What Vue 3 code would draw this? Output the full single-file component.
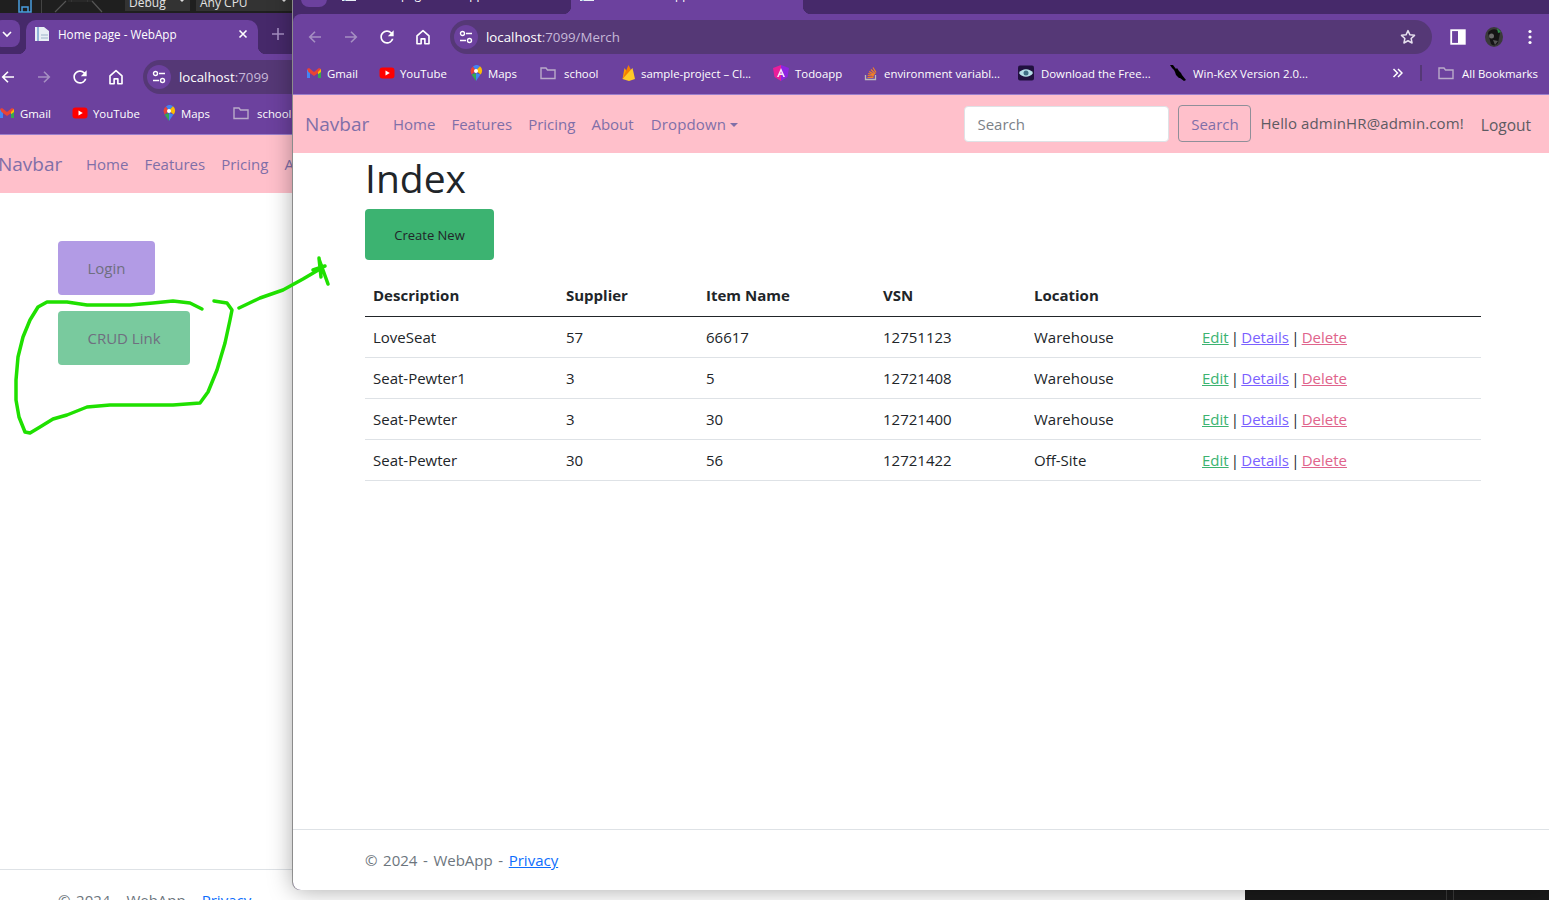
<script setup>
const bookmarks = [
  { name: 'Gmail', icon: 'gmail', w: 73, gap: 5 },
  { name: 'YouTube', icon: 'youtube', w: 89, gap: 5 },
  { name: 'Maps', icon: 'maps', w: 72, gap: 4 },
  { name: 'school', icon: 'folder', w: 81, gap: 8 },
  { name: 'sample-project – Cl...', icon: 'firebase', w: 152, gap: 4 },
  { name: 'Todoapp', icon: 'angular', w: 90, gap: 6 },
  { name: 'environment variabl...', icon: 'stack', w: 155, gap: 5 },
  { name: 'Download the Free...', icon: 'eye', w: 152, gap: 7 },
  { name: 'Win-KeX Version 2.0...', icon: 'kex', w: 190, gap: 7 },
]

const navLinks = ['Home', 'Features', 'Pricing', 'About']

const windows = [
  {
    id: 'back',
    host: 'localhost',
    path: ':7099',
    canGoBack: true,
    tabs: [{ title: 'Home page - WebApp', active: true }],
  },
  {
    id: 'front',
    host: 'localhost',
    path: ':7099/Merch',
    canGoBack: false,
    tabs: [
      { title: 'Home page - WebApp', active: false },
      { title: 'Index - WebApp', active: true },
    ],
  },
]

const merch = [
  { desc: 'LoveSeat', supplier: '57', item: '66617', vsn: '12751123', location: 'Warehouse' },
  { desc: 'Seat-Pewter1', supplier: '3', item: '5', vsn: '12721408', location: 'Warehouse' },
  { desc: 'Seat-Pewter', supplier: '3', item: '30', vsn: '12721400', location: 'Warehouse' },
  { desc: 'Seat-Pewter', supplier: '30', item: '56', vsn: '12721422', location: 'Off-Site' },
]
</script>

<template>
  <div class="desktop">
    <div class="ide-bar">
      <svg class="ide-save" width="14" height="13" viewBox="0 0 14 13">
        <path d="M1 -4h12v16H1z M4 7h6v5H4z" fill="none" stroke="#4a9fe0" stroke-width="1.5" />
      </svg>
      <i class="ide-sep"></i>
      <svg class="ide-arrows" width="60" height="13" viewBox="0 0 60 13">
        <path d="M1 12 12 1M18 1l-1 0M34 1l-1 0M38 1l10 11" fill="none" stroke="#555" stroke-width="1.2" />
        <path d="M14 1h24" fill="none" stroke="#333" stroke-width="1" />
      </svg>
      <div class="ide-select debug">Debug<span class="ide-caret"></span></div>
      <div class="ide-select cpu">Any CPU<span class="ide-caret"></span></div>
    </div>

    <section v-for="win in windows" :key="win.id" class="window" :class="win.id">
      <div class="tabstrip">
        <div class="tab-search">
          <svg width="12" height="12" viewBox="0 0 12 12">
            <path d="M2 4l4 4 4-4" fill="none" stroke="#fff" stroke-width="1.6" />
          </svg>
        </div>
        <div v-for="tab in win.tabs" :key="tab.title" class="tab" :class="{ active: tab.active }">
          <svg class="tab-icon" width="16" height="16" viewBox="0 0 16 16">
            <path d="M1 1h9l5 4v10H1z" fill="#e8eef5" />
            <path d="M4 1v14" stroke="#8fb4d8" stroke-width="2" />
            <path d="M7 9h7M7 12h7" stroke="#b5c6d8" stroke-width="1.5" />
          </svg>
          <span class="tab-title">{{ tab.title }}</span>
          <svg class="tab-close" width="10" height="10" viewBox="0 0 10 10">
            <path d="M1.5 1.5l7 7M8.5 1.5l-7 7" stroke="#fff" stroke-width="1.6" />
          </svg>
        </div>
        <svg v-if="win.id === 'back'" class="tab-new" width="14" height="14" viewBox="0 0 14 14">
          <path d="M7 1v12M1 7h12" stroke="#a58fc2" stroke-width="1.6" />
        </svg>
      </div>

      <div class="toolbar">
        <button class="tool" type="button" aria-label="Back">
          <svg width="18" height="18" viewBox="0 0 24 24">
            <path d="M20 12H5M12 5l-7 7 7 7" fill="none" :stroke="win.canGoBack ? '#fff' : '#a58fc2'" stroke-width="2.2" />
          </svg>
        </button>
        <button class="tool" type="button" aria-label="Forward">
          <svg width="18" height="18" viewBox="0 0 24 24">
            <path d="M4 12h15M12 5l7 7-7 7" fill="none" stroke="#a58fc2" stroke-width="2.2" />
          </svg>
        </button>
        <button class="tool" type="button" aria-label="Reload">
          <svg width="20" height="20" viewBox="0 0 24 24">
            <path d="M17.65 6.35A7.958 7.958 0 0 0 12 4c-4.42 0-7.99 3.58-7.99 8s3.57 8 7.99 8c3.73 0 6.84-2.55 7.73-6h-2.08A5.99 5.99 0 0 1 12 18c-3.31 0-6-2.69-6-6s2.69-6 6-6c1.66 0 3.14.69 4.22 1.78L13 11h7V4l-2.35 2.35z" fill="#fff" />
          </svg>
        </button>
        <button class="tool" type="button" aria-label="Home">
          <svg width="18" height="18" viewBox="0 0 24 24">
            <path d="M4 10.5 12 3.5l8 7V21h-5.5v-6.5h-5V21H4z" fill="none" stroke="#fff" stroke-width="2.2" stroke-linejoin="round" />
          </svg>
        </button>

        <div class="omnibox">
          <span class="site-info">
            <svg width="14" height="14" viewBox="0 0 14 14">
              <circle cx="3.5" cy="3.5" r="2" fill="none" stroke="#fff" stroke-width="1.4" />
              <path d="M7 3.5h6M1 10.5h6" stroke="#fff" stroke-width="1.6" />
              <circle cx="10.5" cy="10.5" r="2" fill="none" stroke="#fff" stroke-width="1.4" />
            </svg>
          </span>
          <span class="url"><b>{{ win.host }}</b>{{ win.path }}</span>
          <svg class="star" width="18" height="18" viewBox="0 0 24 24">
            <path d="M12 3.5l2.6 5.6 6.1.7-4.5 4.2 1.2 6L12 17l-5.4 3 1.2-6-4.5-4.2 6.1-.7z" fill="none" stroke="#e6e0ee" stroke-width="2" stroke-linejoin="round" />
          </svg>
        </div>

        <button class="tool" type="button" aria-label="Side panel">
          <svg width="16" height="16" viewBox="0 0 16 16">
            <rect x="1.2" y="1.2" width="13.6" height="13.6" fill="none" stroke="#fff" stroke-width="1.8" />
            <rect x="8" y="1" width="7" height="14" fill="#fff" />
          </svg>
        </button>
        <button class="tool" type="button" aria-label="Profile">
          <svg width="20" height="20" viewBox="0 0 20 20">
            <ellipse cx="10" cy="10" rx="9" ry="10" fill="#3a3a3a" />
            <path d="M4 6c3-5 9-5 12 0l-2 10c-2 3-5 3-7 1z" fill="#141414" />
            <path d="M13 1l4 4-3 1z" fill="#2e8b4a" />
            <circle cx="7.500" cy="9" r="2.500" fill="#6a6a6a" />
            <path d="M9 13l5 1-3 4z" fill="#555" />
          </svg>
        </button>
        <button class="tool" type="button" aria-label="Menu">
          <svg width="4" height="16" viewBox="0 0 4 16">
            <circle cx="2" cy="2.5" r="1.6" fill="#fff" />
            <circle cx="2" cy="8" r="1.6" fill="#fff" />
            <circle cx="2" cy="13.5" r="1.6" fill="#fff" />
          </svg>
        </button>
      </div>

      <div class="bookmarks">
        <a v-for="b in bookmarks" :key="b.name" class="bookmark" :style="{ width: b.w + 'px', gap: b.gap + 'px' }">
          <svg class="bm-icon" width="16" height="16" viewBox="0 0 16 16">
            <template v-if="b.icon === 'gmail'">
              <path d="M1 4v9h3V7z" fill="#4285f4" />
              <path d="M15 4v9h-3V7z" fill="#34a853" />
              <path d="M1 4 3 3l5 4 5-4 2 1-1.5 3L8 11 2.500 7z" fill="#ea4335" />
              <path d="M12 7l3-3v3l-3 2.300z" fill="#fbbc04" />
            </template>
            <template v-else-if="b.icon === 'youtube'">
              <rect x="0.500" y="2.500" width="15" height="11" rx="3" fill="#f00" />
              <path d="M6.500 5.500v5L10.800 8z" fill="#fff" />
            </template>
            <template v-else-if="b.icon === 'maps'">
              <path d="M8 16 3.500 9.500 8 8z" fill="#34a853" />
              <path d="M8 16l4.500-6.500L8 8z" fill="#4285f4" />
              <path d="M2.500 6A5.500 5.500 0 0 1 5 1.500l3 4L3.500 9.500z" fill="#ea4335" />
              <path d="M5 1.500a5.500 5.500 0 0 1 7-.2L8 5.500z" fill="#4285f4" />
              <path d="M12 1.300a5.500 5.500 0 0 1 .500 8.200L8 5.500z" fill="#fbbc04" />
              <circle cx="8" cy="6" r="2" fill="#fff" />
            </template>
            <template v-else-if="b.icon === 'folder'">
              <path d="M1 3h5l1.500 2H15v8.500H1z" fill="none" stroke="#b9aac9" stroke-width="1.400" />
            </template>
            <template v-else-if="b.icon === 'firebase'">
              <path d="M1.500 14 3.500 3l3.500 5z" fill="#ffa000" />
              <path d="M1.500 14 7.500 0l3.500 7z" fill="#f57c00" />
              <path d="M1.500 14 11.500 3 14 14l-6 2z" fill="#ffca28" />
            </template>
            <template v-else-if="b.icon === 'angular'">
              <path d="M8 0 0 3l1.500 9L8 16z" fill="#e91e9a" />
              <path d="M8 0l8 3-1.500 9L8 16z" fill="#8e24e0" />
              <path d="M8 3 4 12h1.700l.800-2h3l.800 2H12zM7.200 8.500 8 6.500l.800 2z" fill="#f4e3f8" fill-rule="evenodd" />
            </template>
            <template v-else-if="b.icon === 'stack'">
              <path d="M2.500 10v4.500h10V10" fill="none" stroke="#bcbbbb" stroke-width="1.300" />
              <path d="M4.500 12.500h6M4.700 10.500l6 .6M5.200 8.500l5.800 1.600M6.200 6.500l5.300 3M8 4.500l4.300 4.300M10 2.500l3 5" fill="none" stroke="#f48024" stroke-width="1.200" />
            </template>
            <template v-else-if="b.icon === 'eye'">
              <rect x="0" y="0.500" width="16" height="15" rx="2" fill="#21113f" />
              <path d="M1 8c3-5 11-5 14 0-3 5-11 5-14 0z" fill="#b6dfe8" />
              <circle cx="8" cy="8" r="2.500" fill="#3f6f85" />
            </template>
            <template v-else>
              <path d="M0 0l3 0 3 4 1-1 2 3 2 2 1 2 4 5-2 1-4-3-1 0-3-3-1-3-1-2-2-2z" fill="#000" />
            </template>
          </svg>
          <span>{{ b.name }}</span>
        </a>
        <div class="bm-end">
          <svg width="11" height="10" viewBox="0 0 11 10">
            <path d="M1.500 1l4 4-4 4M6 1l4 4-4 4" fill="none" stroke="#fff" stroke-width="1.500" />
          </svg>
          <i class="bm-sep"></i>
          <a class="bookmark all">
            <svg width="16" height="16" viewBox="0 0 16 16">
              <path d="M1 3h5l1.500 2H15v8.500H1z" fill="none" stroke="#b9aac9" stroke-width="1.400" />
            </svg>
            <span>All Bookmarks</span>
          </a>
        </div>
      </div>

      <nav class="navbar">
        <a class="brand">Navbar</a>
        <ul class="nav-links">
          <li v-for="link in navLinks" :key="link">{{ link }}</li>
          <li class="dropdown">Dropdown<i class="caret"></i></li>
        </ul>
        <form class="search" @submit.prevent>
          <input class="search-input" type="text" placeholder="Search" />
          <button class="search-btn" type="button">Search</button>
        </form>
        <span class="hello">Hello adminHR@admin.com!</span>
        <a class="logout">Logout</a>
      </nav>

      <main v-if="win.id === 'back'" class="content home">
        <a class="big-link login">Login</a>
        <a class="big-link crud">CRUD Link</a>
      </main>

      <main v-else class="content">
        <h1>Index</h1>
        <a class="create">Create New</a>
        <table class="merch">
          <colgroup>
            <col class="c-desc" />
            <col class="c-supplier" />
            <col class="c-item" />
            <col class="c-vsn" />
            <col class="c-location" />
            <col />
          </colgroup>
          <thead>
            <tr>
              <th>Description</th>
              <th>Supplier</th>
              <th>Item Name</th>
              <th>VSN</th>
              <th>Location</th>
              <th></th>
            </tr>
          </thead>
          <tbody>
            <tr v-for="row in merch" :key="row.vsn">
              <td>{{ row.desc }}</td>
              <td>{{ row.supplier }}</td>
              <td>{{ row.item }}</td>
              <td>{{ row.vsn }}</td>
              <td>{{ row.location }}</td>
              <td class="actions">
                <a class="edit">Edit</a> | <a class="details">Details</a> | <a class="delete">Delete</a>
              </td>
            </tr>
          </tbody>
        </table>
      </main>

      <footer class="foot">© 2024 - WebApp - <a>Privacy</a></footer>
    </section>

    <i class="seam one"></i>
    <i class="seam two"></i>

    <svg class="scribble" width="340" height="230" viewBox="0 0 340 230">
      <path d="M202 309 190 303 173 301 153 303 130 305 107 305 87 305 67 302 47 302 38 307 30 320 23 337 18 357 16 380 16 400 19 417 25 432 30 433 40 427 53 419 67 415 87 407 110 405 140 405 173 405 200 403 208 392 217 370 225 343 230 320 232 310 227 303 214 301" transform="translate(0 -220)" />
      <path d="M239 308 260 298 283 290 303 279 320 269" transform="translate(0 -220)" />
      <path d="M313 270 325 266M319 258 321 277M319 259 328 284" transform="translate(0 -220)" />
    </svg>
  </div>
</template>

<style scoped>
.desktop {
  position: relative;
  width: 1549px;
  height: 900px;
  overflow: hidden;
  background: #1a1a1a;
  font-family: "Open Sans", "Noto Sans", sans-serif;
  color: #212529;
}

.ide-bar {
  position: absolute;
  top: 0;
  left: 0;
  width: 320px;
  height: 13px;
  display: flex;
  align-items: flex-start;
  background: #1f1f1f;
  overflow: hidden;
  color: #e4e4e4;
  font-size: 12px;
}

.ide-save {
  margin-left: 18px;
}

.ide-sep {
  width: 1px;
  height: 13px;
  margin-left: 9px;
  background: #444;
}

.ide-arrows {
  margin-left: 12px;
}

.ide-select {
  height: 11px;
  display: flex;
  align-items: flex-end;
  justify-content: space-between;
  background: #333;
  line-height: 10px;
  white-space: nowrap;
}

.debug {
  width: 65px;
  margin-left: 11px;
  padding: 0 6px 3px 4px;
  box-sizing: border-box;
}

.cpu {
  width: 96px;
  margin-left: 6px;
  padding: 0 6px 3px 4px;
  box-sizing: border-box;
}

.ide-caret {
  width: 0;
  height: 0;
  margin-bottom: 4px;
  border: 2px solid transparent;
  border-top-color: #ddd;
}

.window {
  position: absolute;
  width: 1256px;
  height: 917px;
  display: flex;
  flex-direction: column;
  background: #46296a;
}

.window.back {
  top: 13px;
  left: -14px;
  width: 1259px;
}

.window.front {
  top: -27px;
  left: 293px;
  box-shadow: 0 0 24px rgba(0, 0, 0, 0.35), -1px 0 0 #a8a8a8;
  border-bottom-left-radius: 8px;
}

.tabstrip {
  height: 41px;
  flex: none;
  display: flex;
  padding-top: 7px;
  box-sizing: border-box;
}

.tab-search {
  width: 26px;
  height: 27px;
  margin-left: 8px;
  display: flex;
  align-items: center;
  justify-content: center;
  background: #6c419e;
  border-radius: 8px;
}

.tab {
  position: relative;
  width: 232px;
  height: 34px;
  margin-left: 6px;
  flex: none;
  display: flex;
  align-items: center;
  padding: 0 10px 6px 8px;
  box-sizing: border-box;
  border-radius: 10px 10px 0 0;
  color: #fff;
  font-size: 11.7px;
}

.tab + .tab {
  margin-left: 6px;
}

.tab.active {
  background: #6c419e;
}

.tab.active::before,
.tab.active::after {
  content: "";
  position: absolute;
  bottom: 0;
  width: 8px;
  height: 8px;
}

.tab.active::before {
  left: -8px;
  background: radial-gradient(circle at 0 0, transparent 8px, #6c419e 8.5px);
}

.tab.active::after {
  right: -8px;
  background: radial-gradient(circle at 100% 0, transparent 8px, #6c419e 8.5px);
}

.tab-icon {
  flex: none;
}

.tab-title {
  margin-left: 8px;
  flex: 1;
  white-space: nowrap;
}

.tab:not(.active) .tab-close {
  display: none;
}

.tab-new {
  margin: 7px 0 0 13px;
}

.toolbar {
  height: 40px;
  flex: none;
  display: flex;
  align-items: flex-start;
  padding: 6px 0 0 4px;
  box-sizing: border-box;
  background: #6c419e;
  border-top-left-radius: 8px;
}

.tool {
  width: 36px;
  height: 34px;
  flex: none;
  display: flex;
  align-items: center;
  justify-content: center;
  padding: 0;
  border: 0;
  background: none;
}

.omnibox {
  width: 982px;
  height: 34px;
  margin: 0 8px 0 9px;
  flex: none;
  display: flex;
  align-items: center;
  padding: 0 15px 0 4px;
  box-sizing: border-box;
  border-radius: 17px;
  background: #553876;
}

.site-info {
  width: 24px;
  height: 24px;
  flex: none;
  display: flex;
  align-items: center;
  justify-content: center;
  border-radius: 50%;
  background: #6c419e;
}

.url {
  margin-left: 8px;
  flex: 1;
  color: #c6b8d8;
  font-size: 13.3px;
}

.url b {
  color: #fff;
  font-weight: 400;
}

.bookmarks {
  height: 41px;
  flex: none;
  display: flex;
  align-items: center;
  padding: 0 0 2px 13px;
  box-sizing: border-box;
  background: #6c419e;
  border-bottom: 1px solid #9a7ecb;
  color: #fff;
  font-size: 11.4px;
}

.bookmark {
  flex: none;
  display: flex;
  align-items: center;
  white-space: nowrap;
}

.bm-icon {
  flex: none;
}

.bm-end {
  margin-left: auto;
  display: flex;
  align-items: center;
  padding-right: 11px;
}

.bm-sep {
  width: 2px;
  height: 16px;
  margin: 0 16px 0 17px;
  background: #553876;
}

.all {
  gap: 8px;
}

.navbar {
  height: 58px;
  flex: none;
  display: flex;
  align-items: center;
  padding: 0 18px 0 12px;
  box-sizing: border-box;
  background: #ffc0cb;
  color: #7f6fa8;
  font-size: 15px;
}

.brand {
  width: 88px;
  flex: none;
  font-size: 19px;
}

.nav-links {
  display: flex;
  gap: 16px;
  margin: -1px 0 0;
  padding: 0;
  list-style: none;
}

.dropdown {
  display: flex;
  align-items: center;
  margin-left: 1px;
  letter-spacing: 0.15px;
}

.caret {
  margin: 2px 0 0 4px;
  border: 4.5px solid transparent;
  border-top-color: #7f6fa8;
  border-bottom: 0;
}

.search {
  margin: -1px 0 0 auto;
  display: flex;
  align-items: center;
  gap: 9px;
}

.search-input {
  width: 205px;
  height: 36px;
  padding: 0 12px;
  box-sizing: border-box;
  border: 1px solid #dee2e6;
  border-radius: 4px;
  background: #fff;
  font: inherit;
}

.search-input::placeholder {
  color: #7b8188;
}

.search-btn {
  width: 73px;
  height: 37px;
  padding: 0;
  border: 1px solid #8f8f99;
  border-radius: 4px;
  background: none;
  color: #7f6fa8;
  font: inherit;
}

.hello {
  margin: -2px 0 0 9px;
  color: #5d5a62;
  letter-spacing: 0.12px;
}

.logout {
  margin: 1px 0 0 17px;
  color: #5d5a62;
  font-size: 15.5px;
}

.content {
  flex: 1;
  padding: 0 68px 0 72px;
  background: #fff;
}

.home {
  display: flex;
  flex-direction: column;
  align-items: flex-start;
  gap: 16px;
  padding-top: 48px;
}

.big-link {
  height: 54px;
  display: flex;
  align-items: center;
  justify-content: center;
  border-radius: 4px;
  color: #6f6f80;
  font-size: 15px;
}

.login {
  width: 97px;
  background: #b29be5;
}

.crud {
  width: 132px;
  background: #79ca9e;
}

h1 {
  margin: 1px 0 7px;
  font-size: 39px;
  font-weight: 500;
  line-height: 48px;
}

.create {
  width: 129px;
  height: 51px;
  display: flex;
  align-items: center;
  justify-content: center;
  border-radius: 4px;
  background: #3cb371;
  font-size: 13px;
}

.merch {
  width: 1116px;
  margin-top: 15px;
  border-collapse: collapse;
  table-layout: fixed;
  font-size: 15px;
}

.c-desc { width: 193px; }
.c-supplier { width: 140px; }
.c-item { width: 177px; }
.c-vsn { width: 151px; }
.c-location { width: 168px; }

th,
td {
  height: 41px;
  padding: 0 8px;
  box-sizing: border-box;
  border-bottom: 1px solid #dee2e6;
  text-align: left;
  white-space: nowrap;
}

th {
  border-bottom-color: #212529;
  font-weight: 700;
}

.actions {
  word-spacing: -1.7px;
}

td a {
  text-decoration: underline;
}

.edit { color: #3cb371; }
.details { color: #7b61ff; }
.delete { color: #e0648c; }

.foot {
  height: 61px;
  flex: none;
  padding-left: 72px;
  box-sizing: border-box;
  border-top: 1px solid #dee2e6;
  border-bottom-left-radius: 8px;
  background: #fff;
  color: #6c757d;
  font-size: 15px;
  line-height: 60px;
  word-spacing: 1.7px;
}

.foot a {
  color: #0d6efd;
  text-decoration: underline;
}

.seam {
  position: absolute;
  top: 890px;
  width: 1px;
  height: 10px;
  background: #333;
}

.seam.one { left: 1446px; }
.seam.two { left: 1453px; }

.scribble {
  position: absolute;
  top: 220px;
  left: 0;
  overflow: visible;
}

.scribble path {
  fill: none;
  stroke: #1fe000;
  stroke-width: 3.5;
  stroke-linecap: round;
  stroke-linejoin: round;
}
</style>
